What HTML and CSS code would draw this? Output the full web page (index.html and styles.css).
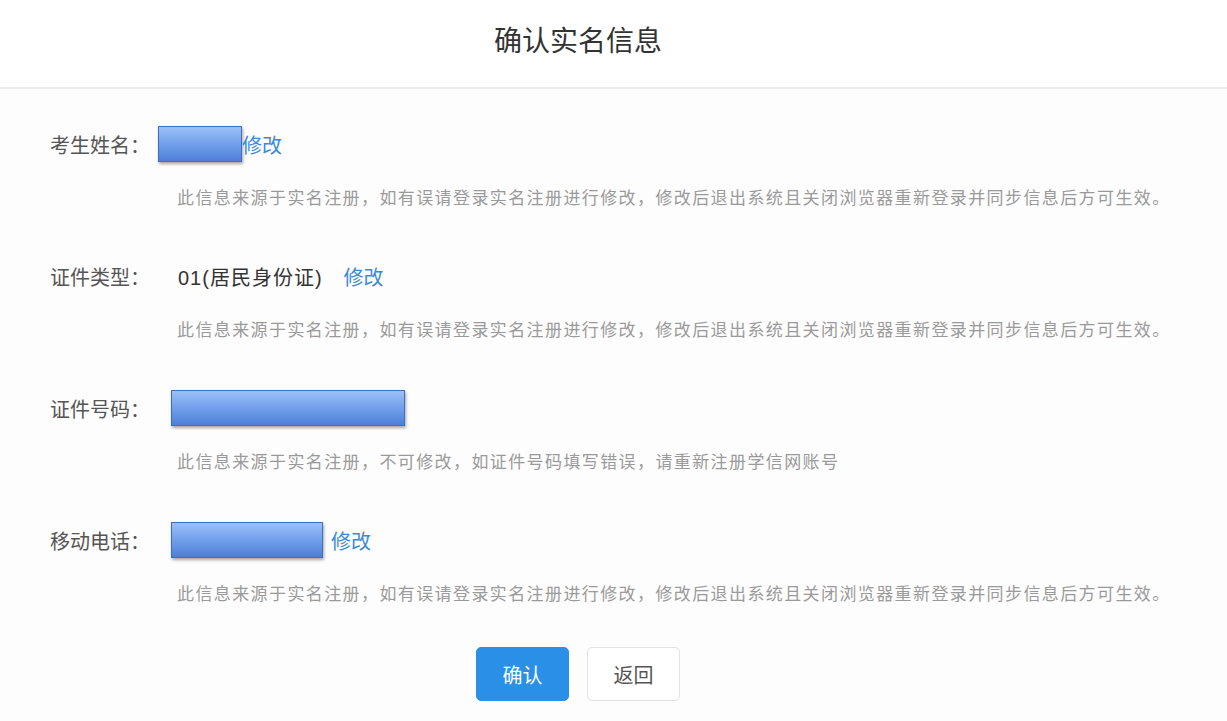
FILE: index.html
```html
<!DOCTYPE html>
<html lang="zh-CN">

<head>
    <meta charset="UTF-8">
    <meta name="viewport" content="width=device-width, initial-scale=1.0">
    <title>确认实名信息</title>
    <link rel="stylesheet" href="styles.css">
</head>

<body>
    <div class="page">
        <div class="header">
            <h1>确认实名信息</h1>
        </div>

        <div class="content">
            <div class="field">
                <div class="row">
                    <span class="label">考生姓名：</span>
                    <span class="mask mask-name"></span>
                    <a class="edit edit-tight" href="javascript:;">修改</a>
                </div>
                <p class="hint">此信息来源于实名注册，如有误请登录实名注册进行修改，修改后退出系统且关闭浏览器重新登录并同步信息后方可生效。</p>
            </div>

            <div class="field">
                <div class="row">
                    <span class="label">证件类型：</span>
                    <span class="value">01(居民身份证)</span>
                    <a class="edit" href="javascript:;">修改</a>
                </div>
                <p class="hint">此信息来源于实名注册，如有误请登录实名注册进行修改，修改后退出系统且关闭浏览器重新登录并同步信息后方可生效。</p>
            </div>

            <div class="field">
                <div class="row">
                    <span class="label">证件号码：</span>
                    <span class="mask mask-id"></span>
                </div>
                <p class="hint">此信息来源于实名注册，不可修改，如证件号码填写错误，请重新注册学信网账号</p>
            </div>

            <div class="field">
                <div class="row">
                    <span class="label">移动电话：</span>
                    <span class="mask mask-phone"></span>
                    <a class="edit edit-near" href="javascript:;">修改</a>
                </div>
                <p class="hint">此信息来源于实名注册，如有误请登录实名注册进行修改，修改后退出系统且关闭浏览器重新登录并同步信息后方可生效。</p>
            </div>

            <div class="actions">
                <button class="btn btn-primary">确认</button>
                <button class="btn">返回</button>
            </div>
        </div>
    </div>
</body>

</html>
```

FILE: styles.css
```css
body,
html {
    margin: 0;
    padding: 0;
}

* {
    box-sizing: border-box;
}

body {
    background: #fdfdfd;
    font-family: "Liberation Sans", "Noto Sans CJK SC", sans-serif;
    color: #555;
}

.page {
    width: 1156px;
}

.header {
    width: 1227px;
    height: 89px;
    border-bottom: 2px solid #ececec;
    background: #fff;
}

.header h1 {
    width: 1156px;
    margin: 0;
    padding-top: 23px;
    text-align: center;
    font-size: 28px;
    line-height: 38px;
    font-weight: normal;
    color: #333;
}

.content {
    padding: 37px 0 0 50px;
}

.field+.field {
    margin-top: 49px;
}

.row {
    display: flex;
    align-items: center;
    height: 36px;
    font-size: 20px;
}

.label {
    width: 108px;
    white-space: nowrap;
}

.value {
    margin-left: 20px;
    color: #333;
    letter-spacing: 1px;
}

.mask {
    height: 36px;
    border: 1px solid #3b6fc6;
    background: linear-gradient(#9cc0f7, #6e9cea 55%, #4d7fd6);
    box-shadow: 1px 2px 3px rgba(0, 0, 0, 0.35);
}

.mask-name {
    width: 84px;
}

.mask-id {
    width: 234px;
    margin-left: 13px;
}

.mask-phone {
    width: 152px;
    margin-left: 13px;
}

.edit {
    margin-left: 21px;
    color: #3a8ad6;
    text-decoration: none;
}

.edit-tight {
    margin-left: 0;
}

.edit-near {
    margin-left: 8px;
}

.hint {
    margin: 27px 0 0 127px;
    font-size: 17px;
    line-height: 20px;
    letter-spacing: 1.4px;
    color: #9a9a9a;
    white-space: nowrap;
}

.actions {
    display: flex;
    justify-content: center;
    gap: 18px;
    margin: 42px 0 0 -50px;
}

.btn {
    width: 93px;
    height: 54px;
    border: 1px solid #e2e2e2;
    border-radius: 5px;
    background: #fff;
    font-family: inherit;
    font-size: 20px;
    color: #555;
}

.btn-primary {
    border-color: #2a8fe6;
    background: #2a8fe6;
    color: #fff;
}
```
